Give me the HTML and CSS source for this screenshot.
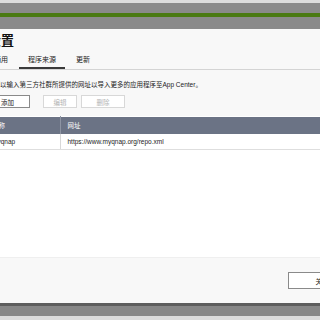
FILE: index.html
```html
<!doctype html>
<html lang="zh-CN">
	<head>
		<meta charset="UTF-8">
		<title>设置</title>
		<link rel="stylesheet" href="styles.css">
	</head>
	<body>
		<div class="desk">
			<div class="desk-top"></div>
			<div class="desk-bar"></div>
		</div>

		<div class="dialog">
			<h1 class="title">设置</h1>

			<div class="tabs">
				<span class="tab">通用</span>
				<span class="tab active">程序来源</span>
				<span class="tab">更新</span>
			</div>

			<div class="toolbar">
				<p class="desc">您可以输入第三方社群所提供的网址以导入更多的应用程序至App Center。</p>
				<div class="btns">
					<button class="btn add">添加</button>
					<button class="btn edit" disabled>编辑</button>
					<button class="btn del" disabled>删除</button>
				</div>
			</div>

			<div class="grid">
				<table>
					<tr><th class="c1">名称</th><th>网址</th></tr>
					<tr><td class="c1">myqnap</td><td>https://www.myqnap.org/repo.xml</td></tr>
				</table>
			</div>

			<div class="footer">
				<button class="btn close">关闭</button>
			</div>
		</div>

		<div class="desk-bottom"></div>
	</body>
</html>
```

FILE: styles.css
```css
* {
	box-sizing: border-box;
}
body {
	margin: 0;
	width: 320px;
	height: 320px;
	overflow: hidden;
	background: #8a8a8a;
	font-family: "Liberation Sans", "Noto Sans CJK SC", sans-serif;
	color: #222;
}

.desk {
	height: 29px;
	background: #8a8a8a;
}
.desk-top {
	height: 3px;
	background: #dcdcdc;
}
.desk-bar {
	height: 4px;
	margin-top: 10px;
	background: #4a7a12;
}

.dialog {
	height: 274px;
	margin-left: -20px;
	width: 400px;
	background: #f8f8f8;
	display: flex;
	flex-direction: column;
}
.title {
	margin: 0;
	padding: 5px 0 0 8px;
	height: 23px;
	font-size: 13px;
	font-weight: bold;
	line-height: 14px;
	color: #111;
}

.tabs {
	display: flex;
	gap: 2px;
	height: 18px;
	padding-left: 5px;
	border-bottom: 1px solid #d4d4d4;
}
.tab {
	padding: 0 9px;
	font-size: 7px;
	line-height: 15px;
	color: #222;
}
.tab.active {
	border-bottom: 2px solid #3a3a3a;
}

.toolbar {
	padding: 11px 0 0 7px;
	height: 46px;
}
.desc {
	margin: 0;
	font-size: 6.5px;
	line-height: 8px;
	color: #222;
}
.btns {
	display: flex;
	margin-top: 6px;
	margin-left: -2px;
}
.btn {
	height: 13px;
	padding: 0;
	font-family: inherit;
	font-size: 6.5px;
	background: #fff;
	border: 1px solid #8a8a8a;
	color: #222;
}
.btn:disabled {
	border-color: #d8d8d8;
	color: #b4b4b4;
}
.add {
	width: 45px;
}
.edit {
	width: 34px;
	margin-left: 13px;
}
.del {
	width: 44px;
	margin-left: 4px;
}

.grid {
	flex: 1;
	background: #fff;
}
table {
	width: 100%;
	border-collapse: collapse;
	font-size: 6.5px;
}
th {
	height: 17px;
	background: #6b7385;
	color: #fff;
	font-weight: normal;
	text-align: left;
	padding: 0 0 0 7px;
	border-top: 1px solid #fff;
}
td {
	height: 16px;
	padding: 0 0 0 7px;
	border-bottom: 1px solid #dedede;
}
.c1 {
	width: 80px;
	border-right: 1px solid #d8d8d8;
}
th.c1 {
	border-right: 1px solid #8d94a3;
	padding-left: 12px;
}
td.c1 {
	padding-left: 12px;
}

.footer {
	height: 46px;
	display: flex;
	align-items: center;
	padding-left: 308px;
	border-top: 1px solid #efefef;
}
.close {
	width: 68px;
	height: 17px;
}

.desk-bottom {
	height: 17px;
	background: #888;
	border-top: 3px solid #5e5e5e;
	border-bottom: 4px solid #dcdcdc;
}
```
